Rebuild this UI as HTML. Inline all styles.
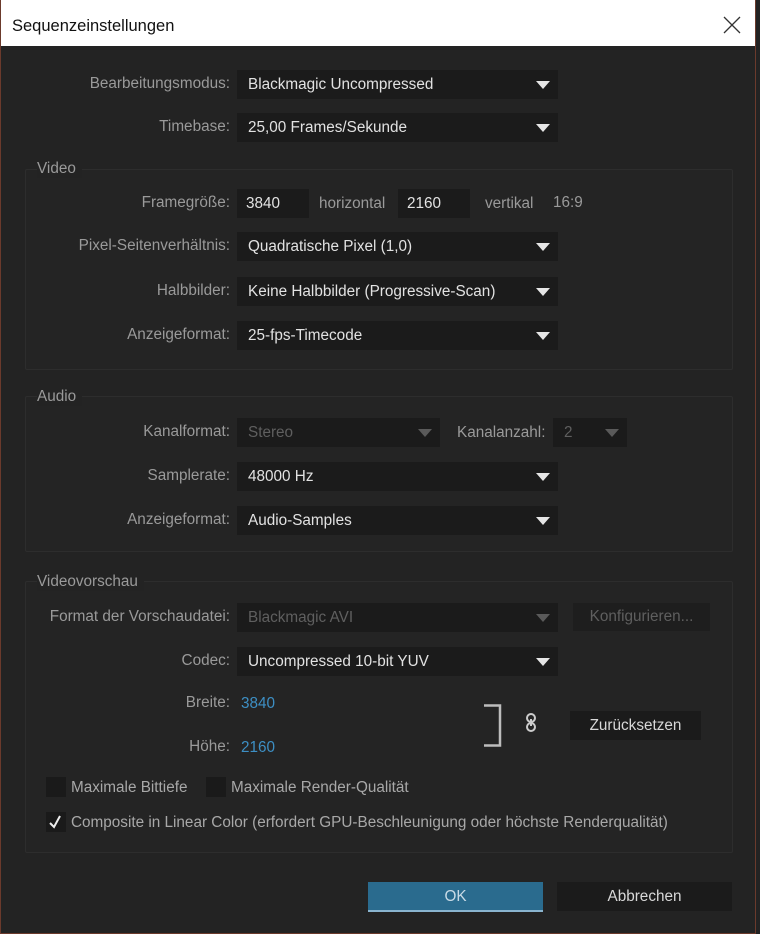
<!DOCTYPE html>
<html><head><meta charset="utf-8"><style>
*{margin:0;padding:0;box-sizing:border-box}
body{width:760px;height:934px;background:#232323;font-family:"Liberation Sans",sans-serif;font-size:15.3px;color:#9a9a9a;position:relative;overflow:hidden}
.a{position:absolute;white-space:nowrap}
.frame{position:absolute;left:0;top:0;width:756px;height:934px;border:1px solid #6b3a2c;border-top:none}
.title{position:absolute;left:1px;top:0;width:754px;height:46px;background:#fff;color:#111;font-size:16.5px}
.lbl{position:absolute;text-align:right;width:230px;left:0;line-height:20px}
.dd{position:absolute;background:#1b1b1b;height:29px;line-height:29px;padding-left:11px;color:#e2e2e2}
.dd.dis{color:#5f5f5f}
.dd::after{content:"";position:absolute;right:8px;top:11px;border-left:7px solid transparent;border-right:7px solid transparent;border-top:8px solid #e6e6e6}
.dd.dis::after{border-top-color:#5a5a5a}
.grp{position:absolute;left:25px;width:708px;border:1px solid #2d2d2d;background:#242424;border-radius:2px}
.gl{position:absolute;left:37px;color:#9a9a9a;background:#232323;padding-right:6px}
.box{position:absolute;background:#1b1b1b;height:29px;line-height:29px;padding-left:9px;color:#e2e2e2}
.btn{position:absolute;background:#1b1b1b;text-align:center;color:#d8d8d8}
.cb{position:absolute;width:20px;height:20px;background:#1a1a1a}
.blue{color:#3d8fc4}
</style></head><body>
<div class="frame"></div>
<div class="title"><span class="a" style="left:11px;top:17px">Sequenzeinstellungen</span>
<svg class="a" style="left:722px;top:16px" width="18" height="18"><path d="M1 1L17 17M17 1L1 17" stroke="#333" stroke-width="1.3"/></svg></div>

<div class="lbl" style="top:74px">Bearbeitungsmodus:</div>
<div class="dd" style="left:237px;top:70px;width:321px">Blackmagic Uncompressed</div>
<div class="lbl" style="top:117px">Timebase:</div>
<div class="dd" style="left:237px;top:113px;width:321px">25,00 Frames/Sekunde</div>

<div class="grp" style="top:169px;height:201px"></div>
<div class="gl" style="top:160px">Video</div>
<div class="lbl" style="top:193px">Framegröße:</div>
<div class="box" style="left:237px;top:189px;width:72px">3840</div>
<span class="a" style="left:319px;top:195px">horizontal</span>
<div class="box" style="left:398px;top:189px;width:72px">2160</div>
<span class="a" style="left:485px;top:195px">vertikal</span>
<span class="a" style="left:553px;top:194px">16:9</span>
<div class="lbl" style="top:236px">Pixel-Seitenverhältnis:</div>
<div class="dd" style="left:237px;top:232px;width:321px">Quadratische Pixel (1,0)</div>
<div class="lbl" style="top:281px">Halbbilder:</div>
<div class="dd" style="left:237px;top:277px;width:321px">Keine Halbbilder (Progressive-Scan)</div>
<div class="lbl" style="top:325px">Anzeigeformat:</div>
<div class="dd" style="left:237px;top:321px;width:321px">25-fps-Timecode</div>

<div class="grp" style="top:396px;height:156px"></div>
<div class="gl" style="top:388px">Audio</div>
<div class="lbl" style="top:422px">Kanalformat:</div>
<div class="dd dis" style="left:237px;top:418px;width:203px">Stereo</div>
<span class="a" style="left:457px;top:424px">Kanalanzahl:</span>
<div class="dd dis" style="left:553px;top:418px;width:74px">2</div>
<div class="lbl" style="top:466px">Samplerate:</div>
<div class="dd" style="left:237px;top:462px;width:321px">48000 Hz</div>
<div class="lbl" style="top:510px">Anzeigeformat:</div>
<div class="dd" style="left:237px;top:506px;width:321px">Audio-Samples</div>

<div class="grp" style="top:581px;height:272px"></div>
<div class="gl" style="top:573px">Videovorschau</div>
<div class="lbl" style="top:607px">Format der Vorschaudatei:</div>
<div class="dd dis" style="left:237px;top:603px;width:321px">Blackmagic AVI</div>
<div class="btn" style="left:573px;top:603px;width:137px;height:28px;line-height:28px;color:#5f5f5f;background:#1e1e1e">Konfigurieren...</div>
<div class="lbl" style="top:651px">Codec:</div>
<div class="dd" style="left:237px;top:647px;width:321px">Uncompressed 10-bit YUV</div>
<div class="lbl" style="top:693px">Breite:</div>
<span class="a blue" style="left:241px;top:695px">3840</span>
<div class="lbl" style="top:737px">Höhe:</div>
<span class="a blue" style="left:241px;top:739px">2160</span>
<svg class="a" style="left:482px;top:704px" width="20" height="43"><path d="M2 1.5H18V41.5H2" fill="none" stroke="#bdbdbd" stroke-width="2.5"/></svg>
<svg class="a" style="left:525px;top:712px" width="12" height="22"><rect x="2" y="2" width="8" height="8" rx="4" fill="none" stroke="#ccc" stroke-width="2"/><rect x="2" y="11" width="8" height="8" rx="4" fill="none" stroke="#ccc" stroke-width="2"/><path d="M6 7V14" stroke="#ccc" stroke-width="2"/></svg>
<div class="btn" style="left:570px;top:711px;width:131px;height:29px;line-height:29px">Zurücksetzen</div>
<div class="cb" style="left:46px;top:777px"></div>
<span class="a" style="left:71px;top:779px;color:#a8a8a8">Maximale Bittiefe</span>
<div class="cb" style="left:206px;top:777px"></div>
<span class="a" style="left:231px;top:779px;color:#a8a8a8">Maximale Render-Qualität</span>
<div class="cb" style="left:46px;top:812px"><svg width="20" height="20"><path d="M4 11L8 15L14 4" fill="none" stroke="#eee" stroke-width="2"/></svg></div>
<span class="a" style="left:71px;top:814px;color:#a8a8a8">Composite in Linear Color (erfordert GPU-Beschleunigung oder höchste Renderqualität)</span>

<div class="btn" style="left:368px;top:882px;width:175px;height:30px;line-height:29px;background:#2a6b8e;border-bottom:2px solid #8ab4cf;color:#c9dbe6">OK</div>
<div class="btn" style="left:557px;top:882px;width:175px;height:29px;line-height:29px">Abbrechen</div>
</body></html>
